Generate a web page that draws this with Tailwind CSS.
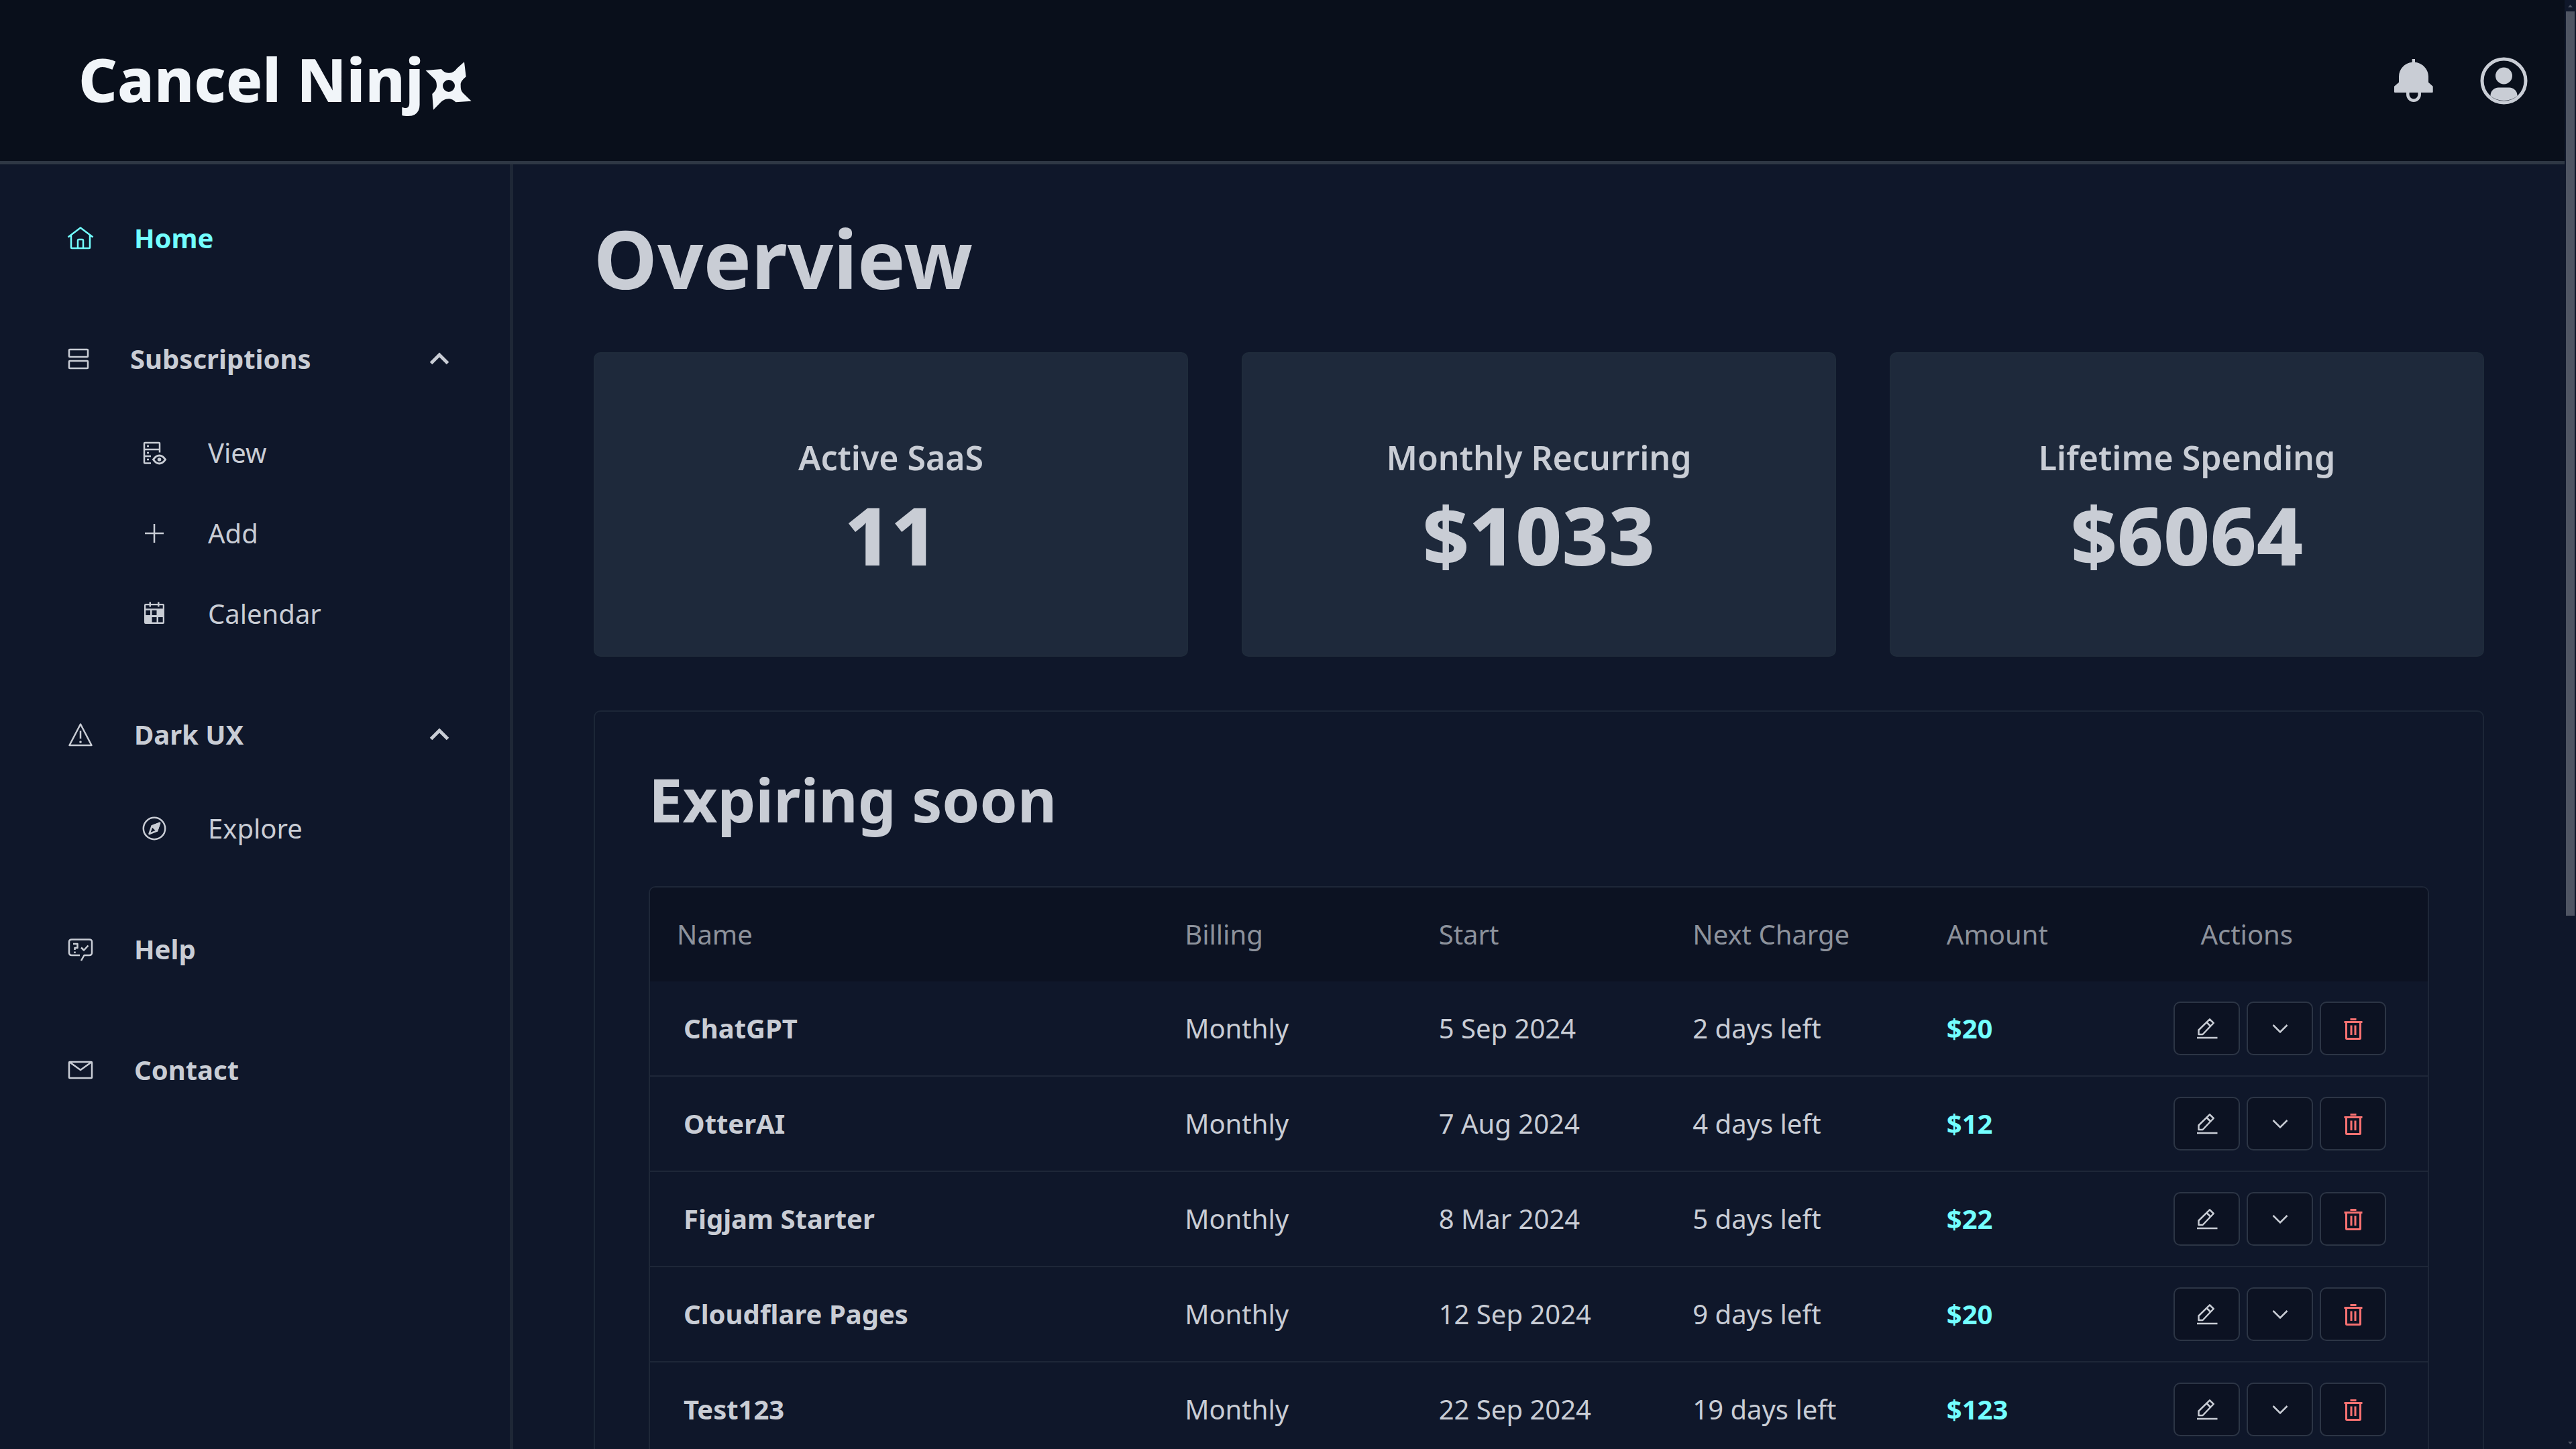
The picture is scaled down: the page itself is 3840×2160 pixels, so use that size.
<!DOCTYPE html>
<html lang="en">
<head>
<meta charset="utf-8">
<meta name="viewport" content="width=device-width, initial-scale=1">
<title>Cancel Ninja</title>
<script src="https://cdn.jsdelivr.net/npm/@tailwindcss/browser@4"></script>
</head>
<body class="flex h-screen overflow-hidden bg-[#0f172a] font-['Noto_Sans',sans-serif] text-[40px] leading-[60px] text-[#c9cdd5]">

<svg class="hidden" aria-hidden="true">
  <symbol id="edit" viewBox="0 0 40 40" fill="none" stroke="currentColor" stroke-width="2.500" stroke-linejoin="round">
    <path d="M5 34H35.500M7.500 29V22.500L24 6.300L29.700 12L13.500 29ZM19.500 11L25 16.500"/>
  </symbol>
  <symbol id="down" viewBox="0 0 40 40" fill="none" stroke="currentColor" stroke-width="2.500">
    <path d="M9.500 15L20 25.500L30.500 15"/>
  </symbol>
  <symbol id="trash" viewBox="0 0 40 40" fill="none" stroke="currentColor" stroke-width="3">
    <path d="M6.500 10.500H33.500M15.500 6.500H24.500M9.500 10.500V34.500Q9.500 35.500 10.500 35.500H29.500Q30.500 35.500 30.500 34.500V10.500M17 15.500V30M23 15.500V30"/>
  </symbol>
  <symbol id="up" viewBox="0 0 40 40" fill="none" stroke="currentColor" stroke-width="5">
    <path d="M7.500 26.500L20 14L32.500 26.500"/>
  </symbol>
</svg>

<div class="flex min-w-0 flex-1 flex-col">
  <header class="flex h-[245px] shrink-0 items-center justify-between border-b-5 border-[#2e3744] bg-[#090f1b] pr-[53px] pl-[117px]">
    <a href="#" class="flex items-center pb-1.5 text-[90px] leading-[120px] font-extrabold text-[#f1f5f9]" aria-label="Cancel Ninja">
      <span>Cancel Ninj</span>
      <svg class="mt-[22px] h-[76px] w-[74px]" viewBox="0 0 74 76" fill="currentColor" fill-rule="evenodd" aria-hidden="true">
        <path d="M2.500 15L26 13C30 18 33 18.700 38 18.700C43 18.500 46 16 49.300 11.700L60 2.300L62.700 24.300C56 30 54.500 33 54.700 37C54.700 42 55 45 58.500 49L70.700 60.700L47.300 62.300C43 58 40 57.300 37 57.300C31 57.500 28 60 25 62.500L14 73.700L12.300 50C17 46 19 42 19 38.300C19 33 18 30 15.500 27.500ZM37 29a9 9 0 1 0 0 18a9 9 0 1 0 0 -18Z"/>
      </svg>
    </a>
    <div class="flex items-center gap-[60px]">
      <button type="button" aria-label="Notifications">
        <svg class="size-[75px]" viewBox="0 0 75 75" fill="currentColor">
          <path d="M35.700 5H40V9.800C51 11 60 20 60 31V39.700L66.700 45.700V54Q66.700 55 65.700 55H10Q9 55 9 54V45.700L16 39.700V31C16 20 24.500 11 35.700 9.800Z"/>
          <path d="M29.300 55V58A8.700 8.700 0 0 0 46.700 58V55" fill="none" stroke="currentColor" stroke-width="4.500"/>
        </svg>
      </button>
      <button type="button" aria-label="Account">
        <svg class="size-[75px]" viewBox="0 0 75 75" fill="currentColor">
          <circle cx="37.500" cy="37.500" r="32.500" fill="none" stroke="currentColor" stroke-width="5"/>
          <circle cx="37.500" cy="30" r="12.500"/>
          <path d="M17.500 60V59.500A12 12 0 0 1 29.500 47.500H45.500A12 12 0 0 1 57.500 59.500V60A32 32 0 0 1 17.500 60Z"/>
        </svg>
      </button>
    </div>
  </header>

  <div class="flex min-h-0 flex-1">
    <nav class="flex w-[765px] shrink-0 flex-col gap-[120px] border-r-5 border-[#1e2736] py-20 pr-[85px] pl-[100px] font-bold">
      <a href="#" class="flex items-center gap-[60px] text-[#73ffff]">
        <svg class="size-10" viewBox="0 0 40 40" fill="none" stroke="currentColor" stroke-width="2.500" stroke-linejoin="round"><path d="M1.500 18.500L20 4.500L38.500 18.500M6 16V34Q6 35 7 35H33Q34 35 34 34V16M16 35V23.500Q16 22 17.500 22H22.500Q24 22 24 23.500V35"/></svg>
        Home
      </a>

      <div class="flex flex-col gap-20">
        <button type="button" aria-expanded="true" class="flex items-center text-left">
          <svg class="mr-[60px] h-10 w-[34px]" viewBox="0 0 34 40" fill="none" stroke="currentColor" stroke-width="2.500"><rect x="3" y="6" width="28" height="11" rx="1"/><rect x="3" y="23" width="28" height="11" rx="1"/></svg>
          <span class="flex-1">Subscriptions</span>
          <svg class="size-10"><use href="#up"/></svg>
        </button>
        <div class="flex flex-col gap-[60px] pl-[110px] font-normal">
          <a href="#" class="flex items-center gap-[60px]">
            <svg class="size-10" viewBox="0 0 40 40" fill="none" stroke="currentColor" stroke-width="2.500"><path d="M28 19.500V6Q28 5 27 5H6Q5 5 5 6V34.500Q5 35.500 6 35.500H15M5 15H28M5 25H15"/><path d="M9 10H12M9 20H12M9 30H12"/><path d="M18.500 30Q22.500 24 27.500 24T36.500 30Q32.500 36 27.500 36T18.500 30Z" stroke-width="3"/><circle cx="27.500" cy="30" r="2.800" fill="currentColor" stroke="none"/></svg>
            View
          </a>
          <a href="#" class="flex items-center gap-[60px]">
            <svg class="size-10" viewBox="0 0 40 40" fill="none" stroke="currentColor" stroke-width="2.500"><path d="M6 20H34M20 6V34"/></svg>
            Add
          </a>
          <a href="#" class="flex items-center gap-[60px]">
            <svg class="size-10" viewBox="0 0 40 40" fill="currentColor" fill-rule="evenodd"><path d="M7 5H12.500V2.500H15V5H25V2.500H27.500V5H33Q35 5 35 7V33Q35 35 33 35H7Q5 35 5 33V7Q5 5 7 5ZM7.300 7.300V12.300H32.700V7.300H27.500V9.500H25V7.300H15V9.500H12.500V7.300ZM7.300 14.700V22H14V14.700ZM16.500 14.700V22H23.500V14.700ZM16.500 25V32.500H23.500V25ZM26 25V32.500H32.700V25Z"/></svg>
            Calendar
          </a>
        </div>
      </div>

      <div class="flex flex-col gap-20">
        <button type="button" aria-expanded="true" class="flex items-center text-left">
          <svg class="mr-[60px] size-10" viewBox="0 0 40 40" fill="none" stroke="currentColor" stroke-width="2.500" stroke-linejoin="round"><path d="M20 4.500L36.500 36H3.500ZM20 14.500V26"/><circle cx="20" cy="31" r="1.800" fill="currentColor" stroke="none"/></svg>
          <span class="flex-1">Dark UX</span>
          <svg class="size-10"><use href="#up"/></svg>
        </button>
        <div class="flex flex-col gap-[60px] pl-[110px] font-normal">
          <a href="#" class="flex items-center gap-[60px]">
            <svg class="size-10" viewBox="0 0 40 40" fill="none" stroke="currentColor" stroke-width="2.500" stroke-linejoin="round"><circle cx="20" cy="20" r="16.200"/><path d="M28 12L16.500 16.500L12.500 28L24 23.500Z"/><path d="M28 12L16.500 16.500L24 23.500Z" fill="currentColor"/></svg>
            Explore
          </a>
        </div>
      </div>

      <a href="#" class="flex items-center gap-[60px]">
        <svg class="size-10" viewBox="0 0 40 40" fill="none" stroke="currentColor" stroke-width="2.500" stroke-linejoin="round"><path d="M19 29H7Q3 29 3 25V9Q3 5.500 7 5.500H33Q37 5.500 37 9V25Q37 29 33 29H25.500L21 37M9 12H15.500V18H11.500V21M11.500 23.500V26M21 17.500L25 21.500L31.500 14.500"/></svg>
        Help
      </a>
      <a href="#" class="flex items-center gap-[60px]">
        <svg class="size-10" viewBox="0 0 40 40" fill="none" stroke="currentColor" stroke-width="2.500" stroke-linejoin="round"><rect x="3" y="8" width="34" height="24" rx="1"/><path d="M4 8.500L20 20L36 8.500"/></svg>
        Contact
      </a>
    </nav>

    <main class="flex min-w-0 flex-1 flex-col gap-20 overflow-hidden px-[120px] py-20">
      <h1 class="text-[120px] leading-[120px] font-bold">Overview</h1>

      <section class="grid grid-cols-3 gap-20 text-center" aria-label="Summary">
        <div class="flex flex-col gap-5 rounded-[10px] border-2 border-[#1f2b3b] bg-[#1e293b] py-[120px]">
          <p class="text-[50px] leading-[70px] font-semibold">Active SaaS</p>
          <p class="text-[120px] leading-[120px] font-extrabold">11</p>
        </div>
        <div class="flex flex-col gap-5 rounded-[10px] border-2 border-[#1f2b3b] bg-[#1e293b] py-[120px]">
          <p class="text-[50px] leading-[70px] font-semibold">Monthly Recurring</p>
          <p class="text-[120px] leading-[120px] font-extrabold">$1033</p>
        </div>
        <div class="flex flex-col gap-5 rounded-[10px] border-2 border-[#1f2b3b] bg-[#1e293b] py-[120px]">
          <p class="text-[50px] leading-[70px] font-semibold">Lifetime Spending</p>
          <p class="text-[120px] leading-[120px] font-extrabold">$6064</p>
        </div>
      </section>

      <section class="flex flex-col gap-20 rounded-[10px] border-2 border-[#1c2637] p-20">
        <h2 class="text-[90px] leading-[100px] font-bold">Expiring soon</h2>
        <div class="overflow-hidden rounded-[10px] border-2 border-[#1e2738]">
          <table class="w-full table-fixed border-separate border-spacing-0 text-left">
            <thead class="bg-[#0c1222] text-[#8d929c]">
              <tr class="h-[140px]">
                <th class="w-2/7 pl-10 font-normal">Name</th>
                <th class="w-1/7 pl-10 font-normal">Billing</th>
                <th class="w-1/7 pl-10 font-normal">Start</th>
                <th class="w-1/7 pl-10 font-normal">Next Charge</th>
                <th class="w-1/7 pl-10 font-normal">Amount</th>
                <th class="w-1/7 pl-10 font-normal">Actions</th>
              </tr>
            </thead>
            <tbody class="[&_td]:border-b-2 [&_td]:border-[#1e2738]">
              <tr class="h-[142px]">
                <td class="pl-[50px] font-bold">ChatGPT</td><td class="pl-10">Monthly</td><td class="pl-10">5 Sep 2024</td><td class="pl-10">2 days left</td><td class="pl-10 font-bold text-[#73ffff]">$20</td>
                <td><div class="flex gap-2.5">
                  <button type="button" aria-label="Edit ChatGPT" class="flex h-20 w-[99px] items-center justify-center rounded-[10px] border-2 border-[#2c3545] bg-[#0c1222]"><svg class="size-10"><use href="#edit"/></svg></button>
                  <button type="button" aria-label="Expand ChatGPT" class="flex h-20 w-[99px] items-center justify-center rounded-[10px] border-2 border-[#2c3545] bg-[#0c1222]"><svg class="size-10"><use href="#down"/></svg></button>
                  <button type="button" aria-label="Delete ChatGPT" class="flex h-20 w-[99px] items-center justify-center rounded-[10px] border-2 border-[#2c3545] bg-[#0c1222] text-[#f87171]"><svg class="size-10"><use href="#trash"/></svg></button>
                </div></td>
              </tr>
              <tr class="h-[142px]">
                <td class="pl-[50px] font-bold">OtterAI</td><td class="pl-10">Monthly</td><td class="pl-10">7 Aug 2024</td><td class="pl-10">4 days left</td><td class="pl-10 font-bold text-[#73ffff]">$12</td>
                <td><div class="flex gap-2.5">
                  <button type="button" aria-label="Edit OtterAI" class="flex h-20 w-[99px] items-center justify-center rounded-[10px] border-2 border-[#2c3545] bg-[#0c1222]"><svg class="size-10"><use href="#edit"/></svg></button>
                  <button type="button" aria-label="Expand OtterAI" class="flex h-20 w-[99px] items-center justify-center rounded-[10px] border-2 border-[#2c3545] bg-[#0c1222]"><svg class="size-10"><use href="#down"/></svg></button>
                  <button type="button" aria-label="Delete OtterAI" class="flex h-20 w-[99px] items-center justify-center rounded-[10px] border-2 border-[#2c3545] bg-[#0c1222] text-[#f87171]"><svg class="size-10"><use href="#trash"/></svg></button>
                </div></td>
              </tr>
              <tr class="h-[142px]">
                <td class="pl-[50px] font-bold">Figjam Starter</td><td class="pl-10">Monthly</td><td class="pl-10">8 Mar 2024</td><td class="pl-10">5 days left</td><td class="pl-10 font-bold text-[#73ffff]">$22</td>
                <td><div class="flex gap-2.5">
                  <button type="button" aria-label="Edit Figjam Starter" class="flex h-20 w-[99px] items-center justify-center rounded-[10px] border-2 border-[#2c3545] bg-[#0c1222]"><svg class="size-10"><use href="#edit"/></svg></button>
                  <button type="button" aria-label="Expand Figjam Starter" class="flex h-20 w-[99px] items-center justify-center rounded-[10px] border-2 border-[#2c3545] bg-[#0c1222]"><svg class="size-10"><use href="#down"/></svg></button>
                  <button type="button" aria-label="Delete Figjam Starter" class="flex h-20 w-[99px] items-center justify-center rounded-[10px] border-2 border-[#2c3545] bg-[#0c1222] text-[#f87171]"><svg class="size-10"><use href="#trash"/></svg></button>
                </div></td>
              </tr>
              <tr class="h-[142px]">
                <td class="pl-[50px] font-bold">Cloudflare Pages</td><td class="pl-10">Monthly</td><td class="pl-10">12 Sep 2024</td><td class="pl-10">9 days left</td><td class="pl-10 font-bold text-[#73ffff]">$20</td>
                <td><div class="flex gap-2.5">
                  <button type="button" aria-label="Edit Cloudflare Pages" class="flex h-20 w-[99px] items-center justify-center rounded-[10px] border-2 border-[#2c3545] bg-[#0c1222]"><svg class="size-10"><use href="#edit"/></svg></button>
                  <button type="button" aria-label="Expand Cloudflare Pages" class="flex h-20 w-[99px] items-center justify-center rounded-[10px] border-2 border-[#2c3545] bg-[#0c1222]"><svg class="size-10"><use href="#down"/></svg></button>
                  <button type="button" aria-label="Delete Cloudflare Pages" class="flex h-20 w-[99px] items-center justify-center rounded-[10px] border-2 border-[#2c3545] bg-[#0c1222] text-[#f87171]"><svg class="size-10"><use href="#trash"/></svg></button>
                </div></td>
              </tr>
              <tr class="h-[142px]">
                <td class="pl-[50px] font-bold">Test123</td><td class="pl-10">Monthly</td><td class="pl-10">22 Sep 2024</td><td class="pl-10">19 days left</td><td class="pl-10 font-bold text-[#73ffff]">$123</td>
                <td><div class="flex gap-2.5">
                  <button type="button" aria-label="Edit Test123" class="flex h-20 w-[99px] items-center justify-center rounded-[10px] border-2 border-[#2c3545] bg-[#0c1222]"><svg class="size-10"><use href="#edit"/></svg></button>
                  <button type="button" aria-label="Expand Test123" class="flex h-20 w-[99px] items-center justify-center rounded-[10px] border-2 border-[#2c3545] bg-[#0c1222]"><svg class="size-10"><use href="#down"/></svg></button>
                  <button type="button" aria-label="Delete Test123" class="flex h-20 w-[99px] items-center justify-center rounded-[10px] border-2 border-[#2c3545] bg-[#0c1222] text-[#f87171]"><svg class="size-10"><use href="#trash"/></svg></button>
                </div></td>
              </tr>
            </tbody>
          </table>
        </div>
      </section>
    </main>
  </div>
</div>

<!-- Page scrollbar -->
<div class="flex w-[17px] shrink-0 flex-col items-center bg-[#0f172a] text-[#4f5563]" aria-hidden="true">
  <svg class="size-[17px] shrink-0" viewBox="0 0 17 17" fill="currentColor"><path d="M5 11L8.500 7L12 11Z"/></svg>
  <div class="min-h-0 w-full flex-1 px-0.5"><div class="h-[63.4%] w-full bg-[#4f5563]"></div></div>
  <svg class="size-[17px] shrink-0" viewBox="0 0 17 17" fill="currentColor"><path d="M5 6L8.500 10L12 6Z"/></svg>
</div>
</body>
</html>
